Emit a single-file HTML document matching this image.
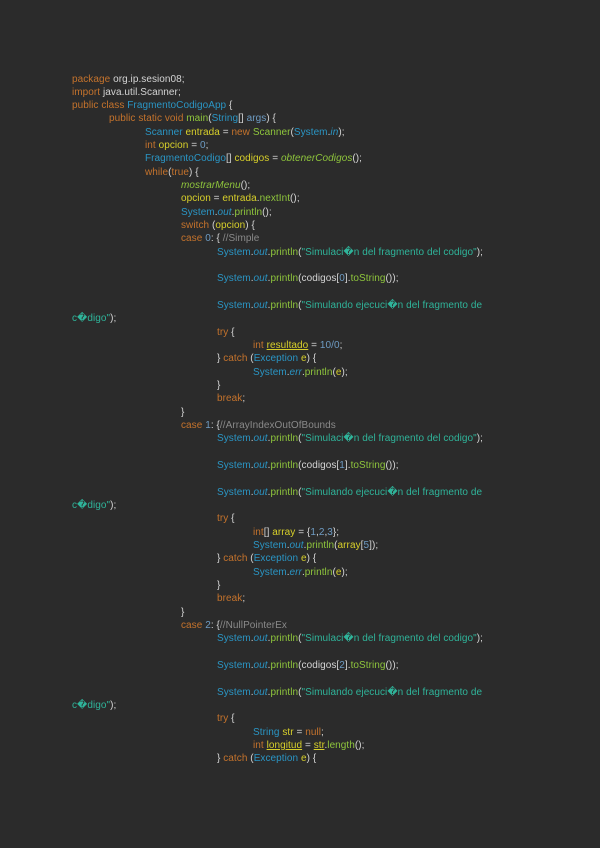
<!DOCTYPE html>
<html><head><meta charset="utf-8"><style>
html,body{margin:0;padding:0;background:#2b2b2b;width:600px;height:848px;overflow:hidden}
#c{position:absolute;left:0;top:72.5px;font-family:"Liberation Sans",sans-serif;font-size:10px;letter-spacing:0.06px;color:#d4d4d4;}
#c div{height:13.33px;line-height:13.33px;white-space:pre;}
.i0{padding-left:72px}.i1{padding-left:109px}.i2{padding-left:145px}.i3{padding-left:181px}.i4{padding-left:217px}.i5{padding-left:253px}
.k{color:#c5732c}.t{color:#2a95c4}.m{color:#8fc63c}.v{color:#d8d02a}.s{color:#2fb49a}.n{color:#6e9cc4}.c{color:#8a8a8a}.sm{color:#8fc63c;font-style:italic}.f{color:#2a95c4;font-style:italic}.u{text-decoration:underline}
</style></head><body><div id="c">
<div class="i0"><span class="k">package</span> org.ip.sesion08;</div>
<div class="i0"><span class="k">import</span> java.util.Scanner;</div>
<div class="i0"><span class="k">public class</span> <span class="t">FragmentoCodigoApp</span> {</div>
<div class="i1"><span class="k">public static void</span> <span class="m">main</span>(<span class="t">String</span>[] <span class="n">args</span>) {</div>
<div class="i2"><span class="t">Scanner</span> <span class="v">entrada</span> = <span class="k">new</span> <span class="m">Scanner</span>(<span class="t">System</span>.<span class="f">in</span>);</div>
<div class="i2"><span class="k">int</span> <span class="v">opcion</span> = <span class="n">0</span>;</div>
<div class="i2"><span class="t">FragmentoCodigo</span>[] <span class="v">codigos</span> = <span class="sm">obtenerCodigos</span>();</div>
<div class="i2"><span class="k">while</span>(<span class="k">true</span>) {</div>
<div class="i3"><span class="sm">mostrarMenu</span>();</div>
<div class="i3"><span class="v">opcion</span> = <span class="v">entrada</span>.<span class="m">nextInt</span>();</div>
<div class="i3"><span class="t">System</span>.<span class="f">out</span>.<span class="m">println</span>();</div>
<div class="i3"><span class="k">switch</span> (<span class="v">opcion</span>) {</div>
<div class="i3"><span class="k">case</span> <span class="n">0</span>: { <span class="c">//Simple</span></div>
<div class="i4"><span class="t">System</span>.<span class="f">out</span>.<span class="m">println</span>(<span class="s">"Simulaci�n del fragmento del codigo"</span>);</div>
<div></div>
<div class="i4"><span class="t">System</span>.<span class="f">out</span>.<span class="m">println</span>(codigos[<span class="n">0</span>].<span class="m">toString</span>());</div>
<div></div>
<div class="i4"><span class="t">System</span>.<span class="f">out</span>.<span class="m">println</span>(<span class="s">"Simulando ejecuci�n del fragmento de</span></div>
<div class="i0"><span class="s">c�digo"</span>);</div>
<div class="i4"><span class="k">try</span> {</div>
<div class="i5"><span class="k">int</span> <span class="v u">resultado</span> = <span class="n">10/0</span>;</div>
<div class="i4">} <span class="k">catch</span> (<span class="t">Exception</span> <span class="v">e</span>) {</div>
<div class="i5"><span class="t">System</span>.<span class="f">err</span>.<span class="m">println</span>(<span class="v">e</span>);</div>
<div class="i4">}</div>
<div class="i4"><span class="k">break</span>;</div>
<div class="i3">}</div>
<div class="i3"><span class="k">case</span> <span class="n">1</span>: {<span class="c">//ArrayIndexOutOfBounds</span></div>
<div class="i4"><span class="t">System</span>.<span class="f">out</span>.<span class="m">println</span>(<span class="s">"Simulaci�n del fragmento del codigo"</span>);</div>
<div></div>
<div class="i4"><span class="t">System</span>.<span class="f">out</span>.<span class="m">println</span>(codigos[<span class="n">1</span>].<span class="m">toString</span>());</div>
<div></div>
<div class="i4"><span class="t">System</span>.<span class="f">out</span>.<span class="m">println</span>(<span class="s">"Simulando ejecuci�n del fragmento de</span></div>
<div class="i0"><span class="s">c�digo"</span>);</div>
<div class="i4"><span class="k">try</span> {</div>
<div class="i5"><span class="k">int</span>[] <span class="v">array</span> = {<span class="n">1</span>,<span class="n">2</span>,<span class="n">3</span>};</div>
<div class="i5"><span class="t">System</span>.<span class="f">out</span>.<span class="m">println</span>(<span class="v">array</span>[<span class="n">5</span>]);</div>
<div class="i4">} <span class="k">catch</span> (<span class="t">Exception</span> <span class="v">e</span>) {</div>
<div class="i5"><span class="t">System</span>.<span class="f">err</span>.<span class="m">println</span>(<span class="v">e</span>);</div>
<div class="i4">}</div>
<div class="i4"><span class="k">break</span>;</div>
<div class="i3">}</div>
<div class="i3"><span class="k">case</span> <span class="n">2</span>: {<span class="c">//NullPointerEx</span></div>
<div class="i4"><span class="t">System</span>.<span class="f">out</span>.<span class="m">println</span>(<span class="s">"Simulaci�n del fragmento del codigo"</span>);</div>
<div></div>
<div class="i4"><span class="t">System</span>.<span class="f">out</span>.<span class="m">println</span>(codigos[<span class="n">2</span>].<span class="m">toString</span>());</div>
<div></div>
<div class="i4"><span class="t">System</span>.<span class="f">out</span>.<span class="m">println</span>(<span class="s">"Simulando ejecuci�n del fragmento de</span></div>
<div class="i0"><span class="s">c�digo"</span>);</div>
<div class="i4"><span class="k">try</span> {</div>
<div class="i5"><span class="t">String</span> <span class="v">str</span> = <span class="k">null</span>;</div>
<div class="i5"><span class="k">int</span> <span class="v u">longitud</span> = <span class="v u">str</span>.<span class="m">length</span>();</div>
<div class="i4">} <span class="k">catch</span> (<span class="t">Exception</span> <span class="v">e</span>) {</div>
</div></body></html>
